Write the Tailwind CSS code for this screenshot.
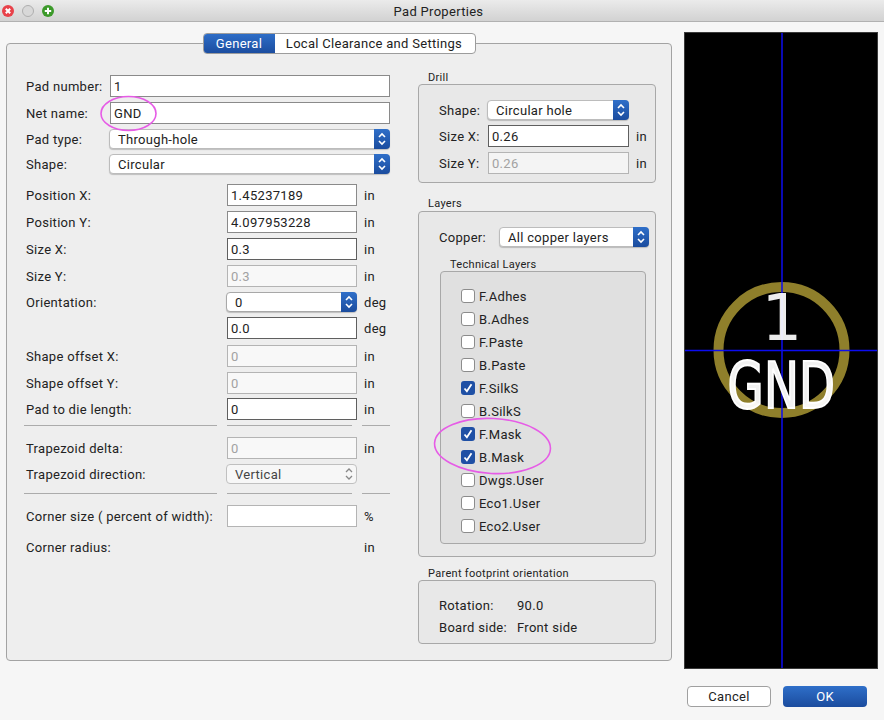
<!DOCTYPE html>
<html lang="en">
  <head>
    <meta charset="UTF-8" />
    <script src="https://cdn.jsdelivr.net/npm/@tailwindcss/browser@4"></script>
    <title>Pad Properties</title>
  </head>
  <body class="bg-[#f6f6f6]">
    <div class="relative w-[884px] h-[720px] overflow-hidden bg-[#f6f6f6] font-['Roboto',sans-serif] text-[13px] tracking-[0.3px] text-[#222] [&_span]:translate-y-px">
      <!-- title bar -->
      <div class="relative flex items-center justify-center h-[22px] pr-[7px] border-b border-[#b1b1b1] bg-gradient-to-b from-[#ebebeb] to-[#d2d2d2]">
        <div class="absolute left-[2px] top-[5px] flex gap-[8px]">
          <svg width="12" height="12" viewBox="0 0 12 12"><circle cx="6" cy="6" r="6" fill="#e8424a" /><path d="M3.8 3.8l4.4 4.4M8.2 3.8l-4.4 4.4" stroke="#fff" stroke-width="2" /></svg>
          <svg width="12" height="12" viewBox="0 0 12 12"><circle cx="6" cy="6" r="5.5" fill="#d8d8d8" stroke="#aeaeae" /></svg>
          <svg width="12" height="12" viewBox="0 0 12 12"><circle cx="6" cy="6" r="6" fill="#3c9a2a" /><path d="M6 2.8v6.4M2.8 6h6.4" stroke="#fff" stroke-width="2" /></svg>
        </div>
        <span>Pad Properties</span>
      </div>

      <div class="flex pl-[6px] gap-[12px]">
        <!-- tab panel -->
        <div class="relative flex mt-[21px] w-[666px] h-[618px] rounded-[4px] border border-[#a3a3a3] bg-[#eeeeee] pl-[19px]">
          <div class="absolute left-[196px] top-[-11px] flex h-[21px] w-[273px] overflow-hidden rounded-[4px] border border-[#9c9c9c] bg-white">
            <div class="flex items-center justify-center w-[72px] -my-px -ml-px bg-gradient-to-b from-[#2f6fc9] to-[#1b4c9e] text-white">General</div>
            <div class="flex items-center justify-center flex-1 pr-[2px]">Local Clearance and Settings</div>
          </div>

          <!-- left column -->
          <div class="flex flex-col w-[364px] pt-[31px]">
            <div class="flex items-center h-[22px]">
              <span class="w-[84px]">Pad number:</span>
              <div class="flex items-center w-[280px] h-[22px] border border-[#8a8a8a] bg-white pl-[3px] pt-[2px]">1</div>
            </div>
            <div class="flex items-center h-[22px] mt-[5px]">
              <span class="w-[84px]">Net name:</span>
              <div class="flex items-center w-[280px] h-[22px] border border-[#8a8a8a] bg-white pl-[3px] pt-[2px]">GND</div>
            </div>
            <div class="flex items-center h-[20px] mt-[5px]">
              <span class="w-[83px]">Pad type:</span>
              <div class="flex items-center justify-between w-[281px] h-[20px] rounded-[4px] border border-[#bcbcbc] bg-white pl-[8px] shadow-[0_1px_1px_rgba(0,0,0,0.2)]">
                <span>Through-hole</span>
                <div class="flex items-center justify-center w-[16px] h-[20px] -mr-px rounded-r-[4px] bg-gradient-to-b from-[#2f6fc9] to-[#1b4c9e]">
                  <svg width="10" height="14" viewBox="0 0 10 14" fill="none" stroke="#fff" stroke-width="1.6"><path d="M2 5l3-3 3 3M2 9l3 3 3-3" /></svg>
                </div>
              </div>
            </div>
            <div class="flex items-center h-[20px] mt-[5px]">
              <span class="w-[83px]">Shape:</span>
              <div class="flex items-center justify-between w-[281px] h-[20px] rounded-[4px] border border-[#bcbcbc] bg-white pl-[8px] shadow-[0_1px_1px_rgba(0,0,0,0.2)]">
                <span>Circular</span>
                <div class="flex items-center justify-center w-[16px] h-[20px] -mr-px rounded-r-[4px] bg-gradient-to-b from-[#2f6fc9] to-[#1b4c9e]">
                  <svg width="10" height="14" viewBox="0 0 10 14" fill="none" stroke="#fff" stroke-width="1.6"><path d="M2 5l3-3 3 3M2 9l3 3 3-3" /></svg>
                </div>
              </div>
            </div>

            <div class="flex items-center h-[22px] mt-[10px]">
              <span class="w-[201px]">Position X:</span>
              <div class="flex items-center w-[130px] h-[22px] border border-[#8a8a8a] bg-white pl-[3px] pt-[2px]">1.45237189</div>
              <span class="ml-[7px]">in</span>
            </div>
            <div class="flex items-center h-[22px] mt-[5px]">
              <span class="w-[201px]">Position Y:</span>
              <div class="flex items-center w-[130px] h-[22px] border border-[#8a8a8a] bg-white pl-[3px] pt-[2px]">4.097953228</div>
              <span class="ml-[7px]">in</span>
            </div>
            <div class="flex items-center h-[22px] mt-[5px]">
              <span class="w-[201px]">Size X:</span>
              <div class="flex items-center w-[130px] h-[22px] border border-[#5f5f5f] bg-white pl-[3px] pt-[2px]">0.3</div>
              <span class="ml-[7px]">in</span>
            </div>
            <div class="flex items-center h-[22px] mt-[5px]">
              <span class="w-[201px]">Size Y:</span>
              <div class="flex items-center w-[130px] h-[22px] border border-[#b4b4b4] bg-[#f8f8f8] pl-[3px] pt-[2px] text-[#a2a2a2]">0.3</div>
              <span class="ml-[7px]">in</span>
            </div>
            <div class="flex items-center h-[20px] mt-[5px]">
              <span class="w-[200px]">Orientation:</span>
              <div class="flex items-center justify-between w-[131px] h-[20px] rounded-[4px] border border-[#a8a8a8] bg-white pl-[8px] shadow-[0_1px_1px_rgba(0,0,0,0.2)]">
                <span>0</span>
                <div class="flex items-center justify-center w-[16px] h-[20px] -mr-px rounded-r-[4px] bg-gradient-to-b from-[#2f6fc9] to-[#1b4c9e]">
                  <svg width="10" height="14" viewBox="0 0 10 14" fill="none" stroke="#fff" stroke-width="1.6"><path d="M2 5l3-3 3 3M2 9l3 3 3-3" /></svg>
                </div>
              </div>
              <span class="ml-[7px]">deg</span>
            </div>
            <div class="flex items-center h-[22px] mt-[5px]">
              <span class="w-[201px]"></span>
              <div class="flex items-center w-[130px] h-[22px] border border-[#5f5f5f] bg-white pl-[3px] pt-[2px]">0.0</div>
              <span class="ml-[7px]">deg</span>
            </div>
            <div class="flex items-center h-[22px] mt-[6px]">
              <span class="w-[201px]">Shape offset X:</span>
              <div class="flex items-center w-[130px] h-[22px] border border-[#b4b4b4] bg-[#f8f8f8] pl-[3px] pt-[2px] text-[#a2a2a2]">0</div>
              <span class="ml-[7px]">in</span>
            </div>
            <div class="flex items-center h-[22px] mt-[5px]">
              <span class="w-[201px]">Shape offset Y:</span>
              <div class="flex items-center w-[130px] h-[22px] border border-[#b4b4b4] bg-[#f8f8f8] pl-[3px] pt-[2px] text-[#a2a2a2]">0</div>
              <span class="ml-[7px]">in</span>
            </div>
            <div class="flex items-center h-[22px] mt-[4px]">
              <span class="w-[201px]">Pad to die length:</span>
              <div class="flex items-center w-[130px] h-[22px] border border-[#5f5f5f] bg-white pl-[3px] pt-[2px]">0</div>
              <span class="ml-[7px]">in</span>
            </div>

            <div class="flex mt-[5px] -ml-[2px] h-px">
              <div class="w-[193px] bg-[#ababab]"></div>
              <div class="w-[125px] ml-[10px] bg-[#ababab]"></div>
              <div class="w-[28px] ml-[10px] bg-[#ababab]"></div>
            </div>

            <div class="flex items-center h-[22px] mt-[11px]">
              <span class="w-[201px]">Trapezoid delta:</span>
              <div class="flex items-center w-[130px] h-[22px] border border-[#b4b4b4] bg-[#f8f8f8] pl-[3px] pt-[2px] text-[#a2a2a2]">0</div>
              <span class="ml-[7px]">in</span>
            </div>
            <div class="flex items-center h-[20px] mt-[5px]">
              <span class="w-[200px]">Trapezoid direction:</span>
              <div class="flex items-center justify-between w-[131px] h-[20px] rounded-[4px] border border-[#c0c0c0] bg-[#f7f7f7] pl-[8px] pr-[2px] text-[#444]">
                <span>Vertical</span>
                <svg width="10" height="14" viewBox="0 0 10 14" fill="none" stroke="#888" stroke-width="1.3"><path d="M2 5l3-3 3 3M2 9l3 3 3-3" /></svg>
              </div>
            </div>

            <div class="flex mt-[9px] -ml-[2px] h-px">
              <div class="w-[193px] bg-[#ababab]"></div>
              <div class="w-[125px] ml-[10px] bg-[#ababab]"></div>
              <div class="w-[28px] ml-[10px] bg-[#ababab]"></div>
            </div>

            <div class="flex items-center h-[22px] mt-[11px]">
              <span class="w-[201px]">Corner size ( percent of width):</span>
              <div class="w-[130px] h-[22px] border border-[#b4b4b4] bg-white"></div>
              <span class="ml-[7px]">%</span>
            </div>
            <div class="flex items-center h-[20px] mt-[10px]">
              <span class="w-[338px]">Corner radius:</span>
              <span>in</span>
            </div>
          </div>

          <!-- right column -->
          <div class="flex flex-col w-[238px] ml-[28px] pt-[26px]">
            <div class="h-[14px] pl-[10px] pt-px text-[11px] leading-[14px]">Drill</div>
            <div class="h-[99px] rounded-[4px] border border-[#a8a8a8] bg-[#e8e8e8] pl-[20px] pt-[15px]">
              <div class="flex items-center h-[20px]">
                <span class="w-[48px]">Shape:</span>
                <div class="flex items-center justify-between w-[142px] h-[20px] rounded-[4px] border border-[#bcbcbc] bg-white pl-[8px] shadow-[0_1px_1px_rgba(0,0,0,0.2)]">
                  <span>Circular hole</span>
                  <div class="flex items-center justify-center w-[16px] h-[20px] -mr-px rounded-r-[4px] bg-gradient-to-b from-[#2f6fc9] to-[#1b4c9e]">
                    <svg width="10" height="14" viewBox="0 0 10 14" fill="none" stroke="#fff" stroke-width="1.6"><path d="M2 5l3-3 3 3M2 9l3 3 3-3" /></svg>
                  </div>
                </div>
              </div>
              <div class="flex items-center h-[22px] mt-[5px]">
                <span class="w-[49px]">Size X:</span>
                <div class="flex items-center w-[141px] h-[22px] border border-[#5f5f5f] bg-white pl-[3px] pt-[2px]">0.26</div>
                <span class="ml-[7px]">in</span>
              </div>
              <div class="flex items-center h-[22px] mt-[5px]">
                <span class="w-[49px]">Size Y:</span>
                <div class="flex items-center w-[141px] h-[22px] border border-[#b4b4b4] bg-[#f4f4f4] pl-[3px] pt-[2px] text-[#a2a2a2]">0.26</div>
                <span class="ml-[7px]">in</span>
              </div>
            </div>

            <div class="h-[14px] mt-[14px] pl-[10px] text-[11px] leading-[14px]">Layers</div>
            <div class="h-[346px] rounded-[4px] border border-[#a8a8a8] bg-[#e8e8e8] pl-[20px] pt-[15px]">
              <div class="flex items-center h-[20px]">
                <span class="w-[60px]">Copper:</span>
                <div class="flex items-center justify-between w-[150px] h-[20px] rounded-[4px] border border-[#bcbcbc] bg-white pl-[8px] shadow-[0_1px_1px_rgba(0,0,0,0.2)]">
                  <span>All copper layers</span>
                  <div class="flex items-center justify-center w-[16px] h-[20px] -mr-px rounded-r-[4px] bg-gradient-to-b from-[#2f6fc9] to-[#1b4c9e]">
                    <svg width="10" height="14" viewBox="0 0 10 14" fill="none" stroke="#fff" stroke-width="1.6"><path d="M2 5l3-3 3 3M2 9l3 3 3-3" /></svg>
                  </div>
                </div>
              </div>
              <div class="h-[14px] mt-[10px] pl-[11px] pt-px text-[11px] leading-[14px]">Technical Layers</div>
              <div class="w-[206px] h-[273px] ml-px rounded-[4px] border border-[#a8a8a8] bg-[#e0e0e0] pl-[20px] pt-[12px]">
                <div class="flex items-center h-[23px]"><div class="w-[14px] h-[14px] rounded-[3px] border border-[#8c8c8c] bg-white"></div><span class="ml-[4px]">F.Adhes</span></div>
                <div class="flex items-center h-[23px]"><div class="w-[14px] h-[14px] rounded-[3px] border border-[#8c8c8c] bg-white"></div><span class="ml-[4px]">B.Adhes</span></div>
                <div class="flex items-center h-[23px]"><div class="w-[14px] h-[14px] rounded-[3px] border border-[#8c8c8c] bg-white"></div><span class="ml-[4px]">F.Paste</span></div>
                <div class="flex items-center h-[23px]"><div class="w-[14px] h-[14px] rounded-[3px] border border-[#8c8c8c] bg-white"></div><span class="ml-[4px]">B.Paste</span></div>
                <div class="flex items-center h-[23px]"><div class="flex items-center justify-center w-[14px] h-[14px] rounded-[3px] bg-[#1f50a5]"><svg width="10" height="10" viewBox="0 0 10 10" fill="none" stroke="#fff" stroke-width="1.8"><path d="M1.5 5.5l2.4 2.8 4.6-7" /></svg></div><span class="ml-[4px]">F.SilkS</span></div>
                <div class="flex items-center h-[23px]"><div class="w-[14px] h-[14px] rounded-[3px] border border-[#8c8c8c] bg-white"></div><span class="ml-[4px]">B.SilkS</span></div>
                <div class="flex items-center h-[23px]"><div class="flex items-center justify-center w-[14px] h-[14px] rounded-[3px] bg-[#1f50a5]"><svg width="10" height="10" viewBox="0 0 10 10" fill="none" stroke="#fff" stroke-width="1.8"><path d="M1.5 5.5l2.4 2.8 4.6-7" /></svg></div><span class="ml-[4px]">F.Mask</span></div>
                <div class="flex items-center h-[23px]"><div class="flex items-center justify-center w-[14px] h-[14px] rounded-[3px] bg-[#1f50a5]"><svg width="10" height="10" viewBox="0 0 10 10" fill="none" stroke="#fff" stroke-width="1.8"><path d="M1.5 5.5l2.4 2.8 4.6-7" /></svg></div><span class="ml-[4px]">B.Mask</span></div>
                <div class="flex items-center h-[23px]"><div class="w-[14px] h-[14px] rounded-[3px] border border-[#8c8c8c] bg-white"></div><span class="ml-[4px]">Dwgs.User</span></div>
                <div class="flex items-center h-[23px]"><div class="w-[14px] h-[14px] rounded-[3px] border border-[#8c8c8c] bg-white"></div><span class="ml-[4px]">Eco1.User</span></div>
                <div class="flex items-center h-[23px]"><div class="w-[14px] h-[14px] rounded-[3px] border border-[#8c8c8c] bg-white"></div><span class="ml-[4px]">Eco2.User</span></div>
              </div>
            </div>

            <div class="h-[14px] mt-[9px] pl-[10px] pt-px text-[11px] leading-[14px]">Parent footprint orientation</div>
            <div class="h-[64px] rounded-[4px] border border-[#a8a8a8] bg-[#e8e8e8] pl-[20px] pt-[13px]">
              <div class="flex items-center h-[22px]"><span class="w-[78px]">Rotation:</span><span>90.0</span></div>
              <div class="flex items-center h-[22px]"><span class="w-[78px]">Board side:</span><span>Front side</span></div>
            </div>
          </div>
        </div>

        <!-- pad preview and buttons -->
        <div class="flex flex-col w-[194px] mt-[10px]">
          <div class="h-[637px] border border-[#3a3a3a] bg-black">
            <svg width="192" height="635" viewBox="685 33 192 635" class="block">
              <circle cx="781.5" cy="350" r="63" fill="none" stroke="#8f7f2b" stroke-width="10" />
              <path d="M782 33V668M685 350.5H877" stroke="#0c0cf0" stroke-width="1.5" />
              <text x="782" y="340" text-anchor="middle" font-family="DejaVu Sans" font-size="64" fill="#fff" fill-opacity="0.93">1</text>
              <text transform="translate(727.5 408) scale(0.73 1)" font-family="DejaVu Sans" font-size="64" fill="#fff" fill-opacity="0.95" stroke="#fff" stroke-width="2">GND</text>
            </svg>
          </div>
          <div class="flex ml-[3px] mt-[17px] gap-[12px]">
            <button class="w-[84px] h-[21px] rounded-[4px] border border-[#a0a0a0] bg-white leading-[19px]">Cancel</button>
            <button class="w-[84px] h-[21px] rounded-[4px] bg-gradient-to-b from-[#2f6fc9] to-[#1b4c9e] text-white leading-[21px]">OK</button>
          </div>
        </div>
      </div>

      <!-- hand drawn annotations -->
      <svg width="884" height="720" class="absolute left-0 top-0 pointer-events-none" fill="none" stroke="#e65ce6" stroke-width="1.6">
        <ellipse cx="128.5" cy="113.5" rx="27.5" ry="17" />
        <ellipse cx="492.5" cy="446" rx="58" ry="27.5" transform="rotate(3 492.5 446)" />
      </svg>
    </div>
  </body>
</html>
